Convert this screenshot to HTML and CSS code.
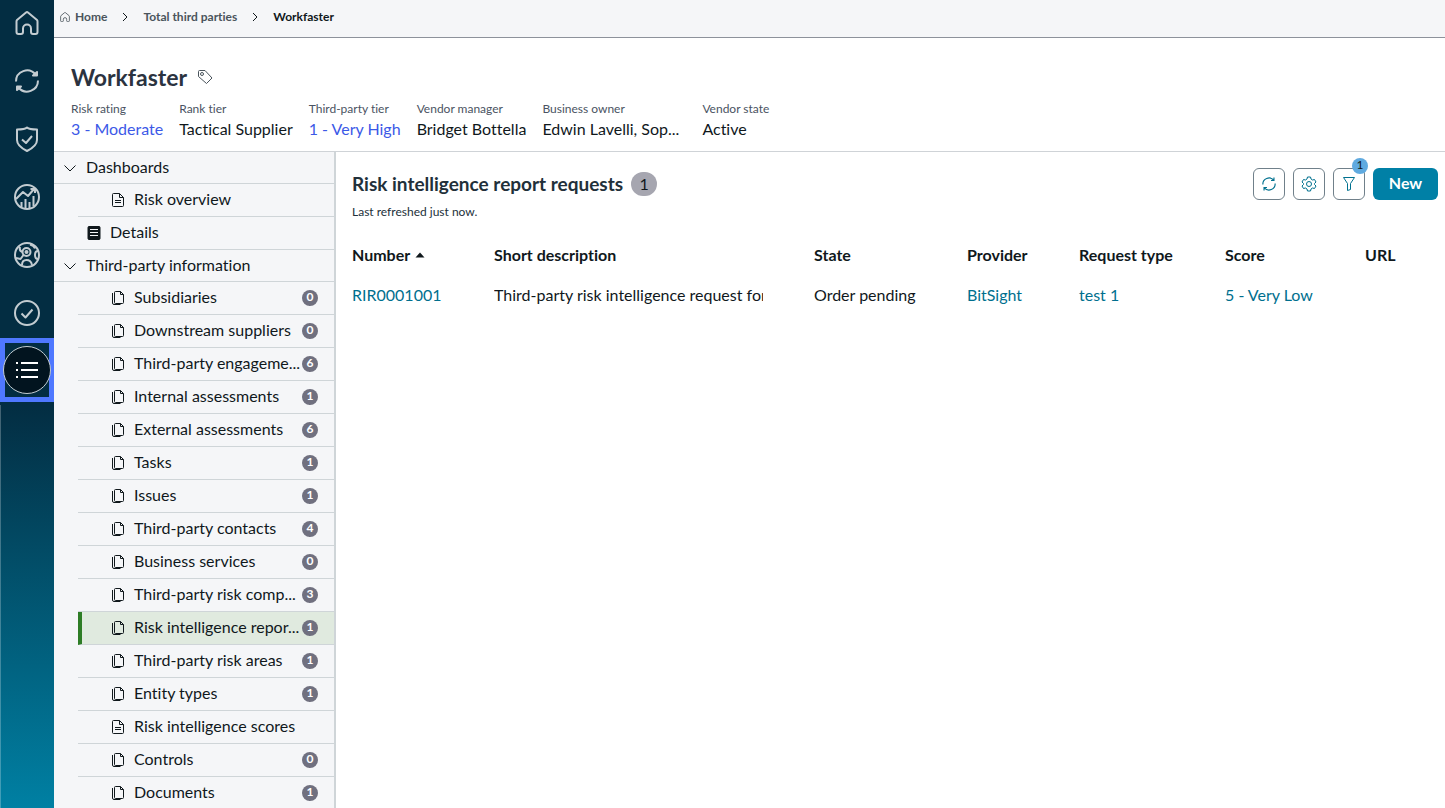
FILE: index.html
```html
<!DOCTYPE html>
<html lang="en">
<head>
    <meta charset="utf-8">
    <title>Workfaster</title>
    <link rel="stylesheet" href="styles.css">
</head>
<body>
    <!-- shared icons -->
    <svg class="sprite" aria-hidden="true">
        <symbol id="i-home" viewBox="0 0 24 24"><path d="M1.500 10.500q0-1 .5-1.500L11 1.500q1-.8 2 0L22 9q.5.500.5 1.500V21q0 2-2 2H18q-2 0-2-2v-3.500a4 4 0 0 0-8 0V21q0 2-2 2H3.500q-2 0-2-2z"/></symbol>
        <symbol id="i-sync" viewBox="0 0 24 24"><path d="M1.500 13A10.500 10.500 0 0 1 20 5.500M22.500 11A10.500 10.500 0 0 1 4 18.500M20.500 1v5h-5M3.500 23v-5h5"/></symbol>
        <symbol id="i-page" viewBox="0 0 14 16"><path d="M2.500 1.500h6l4 4v8a1 1 0 0 1-1 1h-9a1 1 0 0 1-1-1v-11a1 1 0 0 1 1-1zM8.500 1.500v4h4M4 8.500h6M4 10.500h6"/></symbol>
        <symbol id="i-pages" viewBox="0 0 14 16"><path d="M4.500 1.500h5l3 3v8a1 1 0 0 1-1 1h-7a1 1 0 0 1-1-1v-10a1 1 0 0 1 1-1zM9.500 1.500v3h3M1.500 3v10a1.500 1.500 0 0 0 1.500 1.500h6.500"/></symbol>
        <symbol id="i-chevron" viewBox="0 0 12 12"><path d="M0.500 3.500 6 9l5.500-5.500"/></symbol>
        <symbol id="i-next" viewBox="0 0 8 10"><path d="M2 1l4 4-4 4"/></symbol>
    </svg>

    <nav class="rail" aria-label="Workspace">
        <a href="#" aria-label="Home"><svg><use href="#i-home"/></svg></a>
        <a href="#" aria-label="Refresh"><svg viewBox="0 0 24 24"><path d="M1 12.500A11 11 0 0 1 20.500 5.500M23 11.500A11 11 0 0 1 3.500 18.500"/><path class="solid" d="M22 3v3.500h-4zM2 21v-3.500h4z"/></svg></a>
        <a href="#" aria-label="Risk"><svg viewBox="0 0 24 24"><path d="M12 0.500Q14 2.500 22 2.500V13q0 6-10 11Q2 19 2 13V2.500Q10 2.500 12 0.500zM7 12.500l4 3.500 6-7"/></svg></a>
        <a href="#" aria-label="Analytics"><svg viewBox="0 0 24 24"><circle cx="12" cy="12" r="12"/><path d="M1 14l7-7 5 4 6-7M15.500 4H20v4M6.500 22v-5M10.500 23v-9M14.500 23v-6M18.500 21V11"/></svg></a>
        <a href="#" aria-label="Third parties"><svg viewBox="0 0 24 24"><circle cx="12" cy="12" r="12"/><circle cx="11.500" cy="9" r="4"/><circle cx="11.500" cy="9" r="1"/><path d="M7 22q0-5 4.500-5t5.500 5M8.500 12 5.500 16 1 15M5 4q-1 4 2.500 5M23 8q-3 0-3 4t3 4M15 1.500q4 1 5 4"/></svg></a>
        <a href="#" aria-label="Approvals"><svg viewBox="0 0 24 24"><circle cx="12" cy="12" r="12"/><path d="M6.500 12.500l4 4 7-8"/></svg></a>
        <a class="current" href="#" aria-label="Lists"><span><svg viewBox="0 0 24 24"><path d="M1 5h2M1 12h2M1 19h2M6 5h17M6 12h17M6 19h17"/></svg></span></a>
    </nav>

    <div class="page">
        <nav class="crumbs" aria-label="Breadcrumb">
            <a href="#"><svg class="home"><use href="#i-home"/></svg>Home</a>
            <svg class="next"><use href="#i-next"/></svg>
            <a href="#">Total third parties</a>
            <svg class="next"><use href="#i-next"/></svg>
            <span class="here">Workfaster</span>
        </nav>

        <header class="record">
            <div class="title">
                <h1>Workfaster</h1>
                <button type="button" aria-label="Tags"><svg viewBox="0 0 16 16"><path d="M1.500 2.500q0-1 1-1H8L15 9l-5.500 5.500L1.500 7.500z"/><circle cx="5" cy="5" r="1.500"/></svg></button>
            </div>
            <dl class="facts">
                <div><dt>Risk rating</dt><dd class="blue">3 - Moderate</dd></div>
                <div><dt>Rank tier</dt><dd>Tactical Supplier</dd></div>
                <div><dt>Third-party tier</dt><dd class="blue">1 - Very High</dd></div>
                <div><dt>Vendor manager</dt><dd>Bridget Bottella</dd></div>
                <div class="owner"><dt>Business owner</dt><dd>Edwin Lavelli, Sop...</dd></div>
                <div><dt>Vendor state</dt><dd>Active</dd></div>
            </dl>
        </header>

        <div class="body">
            <nav class="tree" aria-label="Record sections">
                <button type="button" class="group"><svg><use href="#i-chevron"/></svg><span>Dashboards</span></button>
                <a class="item" href="#"><svg><use href="#i-page"/></svg><span>Risk overview</span></a>
                <a class="item details" href="#"><svg viewBox="0 0 14 16"><path class="solid" d="M2 1.500h10a1 1 0 0 1 1 1v11a1 1 0 0 1-1 1H2a1 1 0 0 1-1-1v-11a1 1 0 0 1 1-1z"/><path class="lines" d="M3 4.500h8M3 7.500h8M3 10.500h8"/></svg><span>Details</span></a>
                <button type="button" class="group"><svg><use href="#i-chevron"/></svg><span>Third-party information</span></button>
                <a class="item" href="#"><svg><use href="#i-pages"/></svg><span>Subsidiaries</span><b>0</b></a>
                <a class="item" href="#"><svg><use href="#i-pages"/></svg><span>Downstream suppliers</span><b>0</b></a>
                <a class="item" href="#"><svg><use href="#i-pages"/></svg><span>Third-party engageme...</span><b>6</b></a>
                <a class="item" href="#"><svg><use href="#i-pages"/></svg><span>Internal assessments</span><b>1</b></a>
                <a class="item" href="#"><svg><use href="#i-pages"/></svg><span>External assessments</span><b>6</b></a>
                <a class="item" href="#"><svg><use href="#i-pages"/></svg><span>Tasks</span><b>1</b></a>
                <a class="item" href="#"><svg><use href="#i-pages"/></svg><span>Issues</span><b>1</b></a>
                <a class="item" href="#"><svg><use href="#i-pages"/></svg><span>Third-party contacts</span><b>4</b></a>
                <a class="item" href="#"><svg><use href="#i-pages"/></svg><span>Business services</span><b>0</b></a>
                <a class="item" href="#"><svg><use href="#i-pages"/></svg><span>Third-party risk comp...</span><b>3</b></a>
                <a class="item selected" href="#"><svg><use href="#i-pages"/></svg><span>Risk intelligence repor...</span><b>1</b></a>
                <a class="item" href="#"><svg><use href="#i-pages"/></svg><span>Third-party risk areas</span><b>1</b></a>
                <a class="item" href="#"><svg><use href="#i-pages"/></svg><span>Entity types</span><b>1</b></a>
                <a class="item" href="#"><svg><use href="#i-page"/></svg><span>Risk intelligence scores</span></a>
                <a class="item" href="#"><svg><use href="#i-pages"/></svg><span>Controls</span><b>0</b></a>
                <a class="item" href="#"><svg><use href="#i-pages"/></svg><span>Documents</span><b>1</b></a>
            </nav>

            <main class="list">
                <div class="list-head">
                    <div>
                        <h2>Risk intelligence report requests <span class="count">1</span></h2>
                        <p>Last refreshed just now.</p>
                    </div>
                    <div class="actions">
                        <button type="button" aria-label="Refresh list"><svg class="sync"><use href="#i-sync"/></svg></button>
                        <button type="button" aria-label="Settings"><svg viewBox="0 0 16 16"><path d="M6.500 1h3l.5 2 1.500 1 2-.5L15 6l-1.500 1.500v1L15 10l-1.500 2.500-2-.5-1.500 1-.5 2h-3L6 13l-1.500-1-2 .5L1 10l1.500-1.500v-1L1 6l1.500-2.500 2 .5L6 3z"/><circle cx="8" cy="8" r="2.500"/></svg></button>
                        <button type="button" aria-label="Filter"><svg viewBox="0 0 16 16"><path d="M2.500 1.500h11L9.500 7.500v6l-3 1v-7z"/></svg><span class="badge">1</span></button>
                        <button type="button" class="new">New</button>
                    </div>
                </div>

                <table>
                    <colgroup>
                        <col class="c-number"><col class="c-desc"><col class="c-state"><col class="c-provider"><col class="c-type"><col class="c-score"><col>
                    </colgroup>
                    <thead>
                        <tr>
                            <th><div class="sorted">Number <svg viewBox="0 0 10 6"><path d="M0.500 5.500 5 0.500l4.500 5z"/></svg></div></th>
                            <th>Short description</th>
                            <th>State</th>
                            <th>Provider</th>
                            <th>Request type</th>
                            <th>Score</th>
                            <th>URL</th>
                        </tr>
                    </thead>
                    <tbody>
                        <tr>
                            <td><a href="#">RIR0001001</a></td>
                            <td><div class="clip">Third-party risk intelligence request for</div></td>
                            <td>Order pending</td>
                            <td><a href="#">BitSight</a></td>
                            <td><a href="#">test 1</a></td>
                            <td><a href="#">5 - Very Low</a></td>
                            <td></td>
                        </tr>
                    </tbody>
                </table>
            </main>
        </div>
    </div>
</body>
</html>
```
FILE: styles.css
```css
* {
    box-sizing: border-box;
}
body {
    margin: 0;
    height: 100vh;
    display: flex;
    overflow: hidden;
    font-family: Lato, sans-serif;
    font-size: 16px;
    font-variant-ligatures: none;
    line-height: 20px;
    color: #10181c;
    background: #fff;
}
a {
    color: inherit;
    text-decoration: none;
}
button {
    font: inherit;
    font-variant-ligatures: none;
    color: inherit;
    background: none;
    border: 0;
    padding: 0;
    cursor: pointer;
}
h1, h2, p, dl, dd {
    margin: 0;
}
svg {
    display: block;
    flex: none;
    fill: none;
    stroke: currentColor;
}
.sprite {
    position: absolute;
    width: 0;
    height: 0;
}
.solid {
    fill: currentColor;
}

/* left rail */
.rail {
    flex: none;
    width: 54px;
    display: flex;
    flex-direction: column;
    gap: 28px;
    padding-top: 8px;
    color: #c3ccd1;
    background: linear-gradient(#032d42 0, #032d42 50%, #0080a3 100%);
}
.rail::after {
    content: "";
    flex: 1;
    margin-top: -25px;
    border-left: 1px solid #ffffff40;
}
.rail a {
    flex: none;
    height: 30px;
    display: flex;
    align-items: center;
    justify-content: center;
}
.rail svg {
    width: 24px;
    height: 24px;
    stroke-width: 2;
    stroke-linejoin: round;
    overflow: visible;
}
.rail .current {
    height: 64px;
    margin-top: -18px;
    border: 5px solid #4f78ff;
    color: #fff;
}
.rail .current span {
    flex: none;
    width: 48px;
    height: 48px;
    display: flex;
    align-items: center;
    justify-content: center;
    border: 1px solid #c3ccd1;
    border-radius: 50%;
    background: #02141f;
}

/* breadcrumb and record header */
.page {
    flex: 1;
    min-width: 0;
    display: flex;
    flex-direction: column;
}
.crumbs {
    height: 38px;
    display: flex;
    align-items: center;
    padding: 0 6px 4px;
    font-size: 12px;
    font-weight: bold;
    color: #4a545c;
    background: #f5f6f8;
    border-bottom: 1px solid #8d929b;
}
.crumbs a {
    display: flex;
    align-items: center;
    gap: 5px;
}
.crumbs .home {
    width: 10px;
    height: 10px;
    stroke-width: 2;
    overflow: visible;
}
.crumbs .next {
    width: 8px;
    height: 10px;
    margin: 0 14px;
    color: #10181c;
}
.crumbs .here {
    color: #10181c;
}
.record {
    padding: 24px 17px 10px;
    border-bottom: 1px solid #cfd3d7;
}
.title {
    display: flex;
    align-items: center;
    gap: 10px;
}
.title h1 {
    font-size: 23px;
    line-height: 30px;
    color: #2b3340;
}
.title svg {
    width: 16px;
    height: 16px;
    color: #4a545c;
}
.facts {
    display: flex;
    gap: 16px;
    padding-top: 9px;
}
.facts dt {
    font-size: 12px;
    line-height: 16px;
    color: #4a5362;
}
.facts dd {
    line-height: 24px;
}
.facts .blue {
    color: #3c59e7;
}
.facts .owner {
    width: 144px;
}

/* section tree */
.body {
    flex: 1;
    min-height: 0;
    display: flex;
}
.tree {
    flex: none;
    width: 282px;
    overflow: auto;
    scrollbar-width: none;
    background: #f5f6f8;
    border-right: 2px solid #cfd5d8;
}
.group {
    width: 100%;
    height: 32px;
    display: flex;
    align-items: center;
    gap: 10px;
    padding-left: 10px;
    border-bottom: 1px solid #cfd5d8;
}
.group svg {
    width: 12px;
    height: 12px;
}
.item {
    height: 33px;
    margin-left: 24px;
    display: flex;
    align-items: center;
    gap: 9px;
    padding: 0 16px 0 33px;
    border-bottom: 1px solid #cfd5d8;
    white-space: nowrap;
}
.item:has(+ .group) {
    margin-left: 0;
}
.item svg {
    width: 14px;
    height: 16px;
}
.tree span {
    padding-bottom: 2px;
}
.item span {
    flex: 1;
    min-width: 0;
}
.item b {
    flex: none;
    width: 16px;
    height: 16px;
    border-radius: 50%;
    font-size: 12px;
    line-height: 14px;
    text-align: center;
    color: #fff;
    background: #70707f;
}
.details .lines {
    stroke: #f5f6f8;
}
.selected {
    padding-left: 29px;
    border-left: 4px solid #2e7d26;
    background: #e0eadf;
}

/* list */
.list {
    flex: 1;
    min-width: 0;
    padding: 16px 0 0 16px;
}
.list-head {
    display: flex;
    justify-content: space-between;
    padding-right: 7px;
}
.list h2 {
    display: flex;
    align-items: center;
    gap: 8px;
    font-size: 19px;
    line-height: 32px;
    color: #22303a;
}
.count {
    width: 26px;
    font-size: 16px;
    font-weight: normal;
    line-height: 24px;
    text-align: center;
    border-radius: 12px;
    color: #10181c;
    background: #a6a6b0;
}
.list p {
    padding-top: 4px;
    font-size: 12px;
    line-height: 16px;
    color: #22303a;
}
.actions {
    display: flex;
    gap: 8px;
}
.actions button {
    position: relative;
    width: 32px;
    height: 32px;
    display: flex;
    align-items: center;
    justify-content: center;
    border: 1px solid #70808a;
    border-radius: 6px;
    color: #00718f;
}
.actions svg {
    width: 16px;
    height: 16px;
}
.actions .sync {
    width: 14px;
    height: 14px;
    stroke-width: 2;
}
.actions .badge {
    position: absolute;
    top: -11px;
    right: -4px;
    width: 16px;
    height: 16px;
    border-radius: 50%;
    font-size: 12px;
    line-height: 14px;
    color: #10181c;
    background: #5faae0;
}
.actions .new {
    width: 65px;
    padding-bottom: 2px;
    border: 0;
    font-weight: bold;
    color: #fff;
    background: #0080a6;
}
table {
    width: 100%;
    margin-top: 15px;
    table-layout: fixed;
    border-collapse: collapse;
}
th, td {
    height: 40px;
    padding: 0;
    text-align: left;
    white-space: nowrap;
}
td a {
    color: #006f8e;
}
.c-number {
    width: 142px;
}
.c-desc {
    width: 320px;
}
.c-state {
    width: 153px;
}
.c-provider {
    width: 112px;
}
.c-type {
    width: 146px;
}
.c-score {
    width: 140px;
}
.clip {
    margin-right: 51px;
    overflow: hidden;
}
.sorted {
    display: flex;
    align-items: center;
    gap: 5px;
}
.sorted svg {
    width: 10px;
    height: 6px;
    fill: currentColor;
    stroke: none;
}
```
